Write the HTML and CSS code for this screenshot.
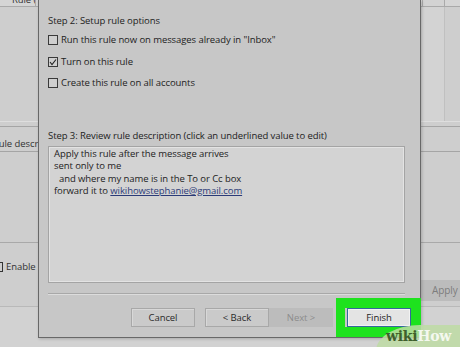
FILE: index.html
```html
<!DOCTYPE html>
<html lang="en">
<head>
  <meta charset="UTF-8" />
  <title>Rules Wizard</title>
  <link rel="stylesheet" href="styles.css">
</head>
<body>
  <div class="screen">
    <!-- window behind the wizard -->
    <div class="bg-win">
      <div class="bg-head"><span class="bg-col">Rule (on order executed)</span><span class="bg-scrollcap"></span></div>
      <div class="bg-list"><span class="bg-scroll"></span></div>
      <div class="bg-desc"><span class="bg-desc-text">Rule description (click an underlined value to edit):</span></div>
      <div class="bg-mid"></div>
      <div class="bg-enable"><span class="bg-check"></span>Enable rules on all messages</div>
      <div class="bg-bar"><span class="bg-apply">Apply</span></div>
      <div class="bg-foot"></div>
    </div>

    <!-- rules wizard dialog -->
    <div class="dialog">
      <div class="step step-2">Step 2: Setup rule options</div>
      <label class="opt opt-1"><span class="box"></span>Run this rule now on messages already in "Inbox"</label>
      <label class="opt opt-2"><span class="box">
        <svg width="8" height="8" viewBox="0 0 8 8"><polyline points="1,4 3,6.5 7,1.5" fill="none" stroke="#222" stroke-width="1.1"/></svg>
      </span>Turn on this rule</label>
      <label class="opt opt-3"><span class="box"></span>Create this rule on all accounts</label>

      <div class="step step-3">Step 3: Review rule description (click an underlined value to edit)</div>
      <div class="desc">
        <div>Apply this rule after the message arrives</div>
        <div>sent only to me</div>
        <div class="indent">and where my name is in the To or Cc box</div>
        <div>forward it to <a href="#" class="link">wikihowstephanie@gmail.com</a></div>
      </div>

      <div class="sep"></div>

      <div class="buttons">
        <span class="btn">Cancel</span>
        <span class="btn btn-back">&lt; Back</span>
        <span class="btn btn-off">Next &gt;</span>
        <span class="btn btn-finish">Finish</span>
      </div>
    </div>

    <div class="hilite"></div>
    <div class="mark"><span class="mark-wiki">wiki</span><span class="mark-how">How</span></div>
  </div>
</body>
</html>
```

FILE: styles.css
```css
* { box-sizing: border-box; }
body { margin: 0; background: #cdcdcd; font-family: "Open Sans", "Noto Sans", sans-serif; font-size: 9.5px; letter-spacing: -0.08px; color: #222; }
.screen { position: relative; width: 460px; height: 347px; overflow: hidden; background: #cecece; }

/* background window */
.bg-win { display: flex; flex-direction: column; height: 347px; color: #333; }
.bg-head { height: 7px; display: flex; border-bottom: 1px solid #a9a9a9; background: #d5d5d5; overflow: hidden; }
.bg-col { width: 36px; padding-left: 12px; border-right: 1px solid #a9a9a9; line-height: 10px; margin-top: -5px; white-space: nowrap; overflow: hidden; }
.bg-scrollcap { margin-left: auto; margin-right: 15px; width: 23px; border-left: 1px solid #aaa; border-right: 1px solid #aaa; background: #d3d3d3; }
.bg-list { height: 115px; display: flex; justify-content: flex-end; border-bottom: 1px solid #dedede; }
.bg-scroll { width: 23px; margin-right: 15px; background: #d3d3d3; border-right: 1px solid #c0c0c0; }
.bg-desc { height: 26px; margin-top: 4px; border-top: 1px solid #a5a5a5; border-bottom: 1px solid #a5a5a5; padding-top: 10px; overflow: hidden; white-space: nowrap; }
.bg-desc-text { margin-left: -7px; }
.bg-mid { height: 91px; border-bottom: 1px solid #a9a9a9; }
.bg-enable { height: 37px; display: flex; align-items: center; gap: 3px; padding-top: 10px; white-space: nowrap; }
.bg-check { width: 10px; height: 10px; margin-left: -7px; border: 1px solid #333; }
.bg-bar { height: 21px; display: flex; justify-content: flex-end; }
.bg-apply { width: 39px; background: #bcbcbc; color: #7d7d7d; font-size: 10px; line-height: 21px; padding-left: 11px; }
.bg-foot { flex: 1; margin-top: 5px; border-top: 1px solid #b9b9b9; background: #d2d2d2; }

/* wizard dialog, a window over the other one */
.dialog { position: absolute; left: 38px; top: 0; width: 383px; height: 338px; background: #c7c7c7;
  border: 1px solid #686868; border-top: none; padding: 14px 9px 0 9px; display: flex; flex-direction: column;
  box-shadow: 1px 1px 3px rgba(0,0,0,0.2); }
.step { line-height: 13px; white-space: nowrap; }
.opt { display: flex; align-items: center; height: 13px; gap: 3px; white-space: nowrap; }
.opt-1 { margin-top: 6px; }
.opt-2 { margin-top: 9px; }
.opt-3 { margin-top: 8px; }
.box { width: 10px; height: 10px; border: 1px solid #3a3a3a; background: #cfcfcf; display: flex; align-items: center; justify-content: center; }
.step-3 { margin-top: 40px; }
.desc { margin-top: 4px; margin-right: 6px; height: 137px; background: #d3d3d3; border: 1px solid #a4a4a4;
  box-shadow: inset 1px 1px 0 #e3e3e3, inset -1px -1px 0 #e3e3e3; padding: 1px 5px; line-height: 12.3px; }
.indent { padding-left: 5px; }
.link { color: #2b3b78; text-decoration: underline; }
.sep { margin-top: 10px; margin-right: 6px; height: 2px; border-top: 1px solid #a8a8a8; border-bottom: 1px solid #dcdcdc; }
.buttons { margin-top: 13px; display: flex; justify-content: flex-end; }
.btn { width: 64px; height: 19px; display: flex; align-items: center; justify-content: center; font-size: 9.5px;
  background: #cacaca; border: 1px solid #a8a8a8; box-shadow: inset 1px 1px 0 #d8d8d8; color: #2a2a2a; }
.btn-back { margin-left: 10px; }
.btn-off { background: #bcbcbc; border-color: #bcbcbc; box-shadow: none; color: #8c8c8c; }
.btn-finish { margin-left: 14px; background: #e4e4e4; border: 1px solid #35689c; box-shadow: inset 0 0 0 1px #f2f2f2; color: #1e1e1e; }

/* highlight and watermark overlays */
.hilite { position: absolute; left: 336px; top: 298px; width: 85px; height: 39px; border: 9px solid #1ee21e; border-width: 10px 10px 10px 9px; }
.mark { position: absolute; left: 376px; top: 325px; width: 100px; height: 30px; border-top-left-radius: 44px 26px;
  background: rgba(190, 220, 165, 0.85); padding: 3px 0 0 10px; font-family: "DejaVu Serif", serif; font-weight: bold; font-size: 14px; letter-spacing: -0.3px; line-height: 17px; }
.mark-wiki { color: #3f5f2c; }
.mark-how { color: #f4f8ef; }
```
